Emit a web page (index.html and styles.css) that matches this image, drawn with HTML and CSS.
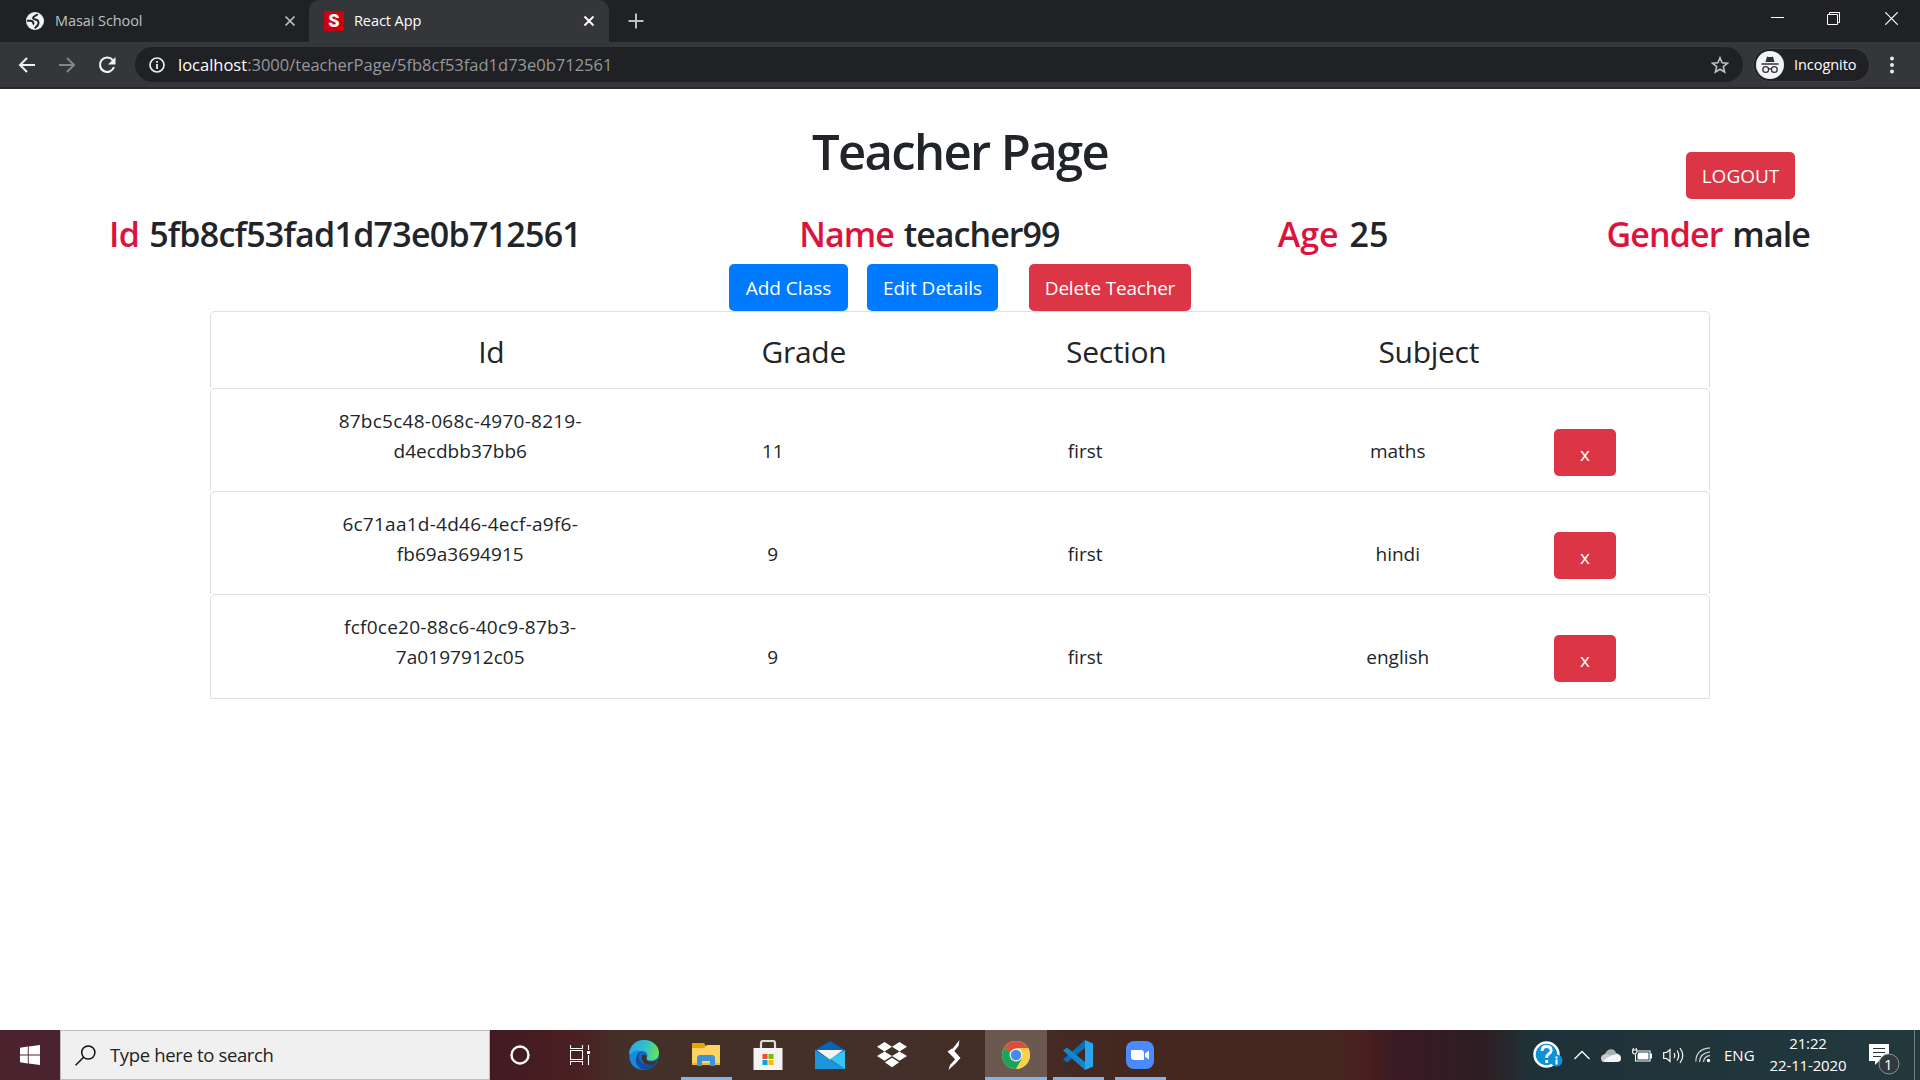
FILE: index.html
```html
<!DOCTYPE html>
<html lang="en">
<head>
<meta charset="utf-8">
<title>React App</title>
<link rel="stylesheet" href="styles.css">
</head>
<body>
<header class="browser">
  <div class="tabs">
    <div class="tab">
      <svg class="fav" width="20" height="20" viewBox="0 0 20 20"><circle cx="10" cy="10" r="9" fill="#f1f3f4"/><path d="M12.500 3c-.5 2-4.500 2-4.500 4 0 1.500 2 1.300 3.500 1.800 2.500.8 2.500 4 1 5.700-1 1.200-2 1.500-2.500 3M2 9.500c2 1 4-.5 5.500 1 1 1 .5 2 1.500 3" fill="none" stroke="#202124" stroke-width="2"/></svg>
      <span class="tab-title">Masai School</span>
      <svg class="close" width="12" height="12" viewBox="0 0 12 12"><path d="M1.500 1.500l9 9m0-9l-9 9" stroke="#bdc1c6" stroke-width="1.700"/></svg>
    </div>
    <div class="tab active">
      <span class="fav s-logo">S</span>
      <span class="tab-title">React App</span>
      <svg class="close" width="12" height="12" viewBox="0 0 12 12"><path d="M1.500 1.500l9 9m0-9l-9 9" stroke="#fff" stroke-width="1.900"/></svg>
    </div>
    <svg class="plus" width="16" height="16" viewBox="0 0 16 16"><path d="M8 .5v15M.5 8h15" stroke="#bdc1c6" stroke-width="2"/></svg>
    <div class="win">
      <svg width="13" height="13" viewBox="0 0 13 13"><path d="M0 5.500h13" stroke="#fff"/></svg>
      <svg width="13" height="13" viewBox="0 0 13 13"><path d="M.5 2.500h10v10H.5zM2.500 2.500v-2h10v10h-2" fill="none" stroke="#fff"/></svg>
      <svg width="13" height="13" viewBox="0 0 13 13"><path d="M.3 .3l12.400 12.400m0-12.400L.3 12.700" stroke="#fff" stroke-width="1.200"/></svg>
    </div>
  </div>
  <div class="toolbar">
    <div class="nav">
      <svg width="18" height="18" viewBox="0 0 18 18"><path d="M17 9H2M9 2L2 9l7 7" fill="none" stroke="#f1f3f4" stroke-width="2"/></svg>
      <svg width="18" height="18" viewBox="0 0 18 18"><path d="M1 9h15M9 2l7 7-7 7" fill="none" stroke="#85868a" stroke-width="2"/></svg>
      <svg width="18" height="18" viewBox="0 0 18 18"><path d="M14.800 4.200A7.200 7.200 0 1 0 16 11" fill="none" stroke="#f1f3f4" stroke-width="2.100"/><path d="M17.500 1v7.500H10z" fill="#f1f3f4"/></svg>
    </div>
    <div class="omnibox">
      <svg width="16" height="16" viewBox="0 0 16 16"><circle cx="8" cy="8" r="7" fill="none" stroke="#e8eaed" stroke-width="1.700"/><path d="M8 7v5M8 4v1.800" stroke="#e8eaed" stroke-width="1.800"/></svg>
      <span class="url"><b>localhost</b>:3000/teacherPage/5fb8cf53fad1d73e0b712561</span>
      <svg class="star" width="18" height="18" viewBox="0 0 18 18"><path d="M9 1.800l2.100 5 5.300.4-4.100 3.500 1.300 5.300L9 13.200 4.400 16l1.300-5.300L1.600 7.200l5.300-.4z" fill="none" stroke="#bdc1c6" stroke-width="1.600"/></svg>
    </div>
    <div class="incognito">
      <svg width="28" height="28" viewBox="0 0 28 28"><circle cx="14" cy="14" r="14" fill="#f1f3f4"/><path d="M9.500 11l1.500-5.500q3 1 6 0l1.500 5.500z" fill="#303134"/><path d="M5.500 13h17" stroke="#303134" stroke-width="1.500"/><circle cx="9.700" cy="18.500" r="2.900" fill="none" stroke="#303134" stroke-width="1.300"/><circle cx="18.300" cy="18.500" r="2.900" fill="none" stroke="#303134" stroke-width="1.300"/><path d="M12.500 18q1.500-.8 3 0" fill="none" stroke="#303134" stroke-width="1.300"/></svg>
      <span>Incognito</span>
    </div>
    <svg class="dots" width="4" height="18" viewBox="0 0 4 18"><circle cx="2" cy="2.500" r="2" fill="#e8eaed"/><circle cx="2" cy="9" r="2" fill="#e8eaed"/><circle cx="2" cy="15.500" r="2" fill="#e8eaed"/></svg>
  </div>
</header>

<main class="page">
  <div class="title-row">
    <h1>Teacher Page</h1>
    <button class="btn danger logout">LOGOUT</button>
  </div>
  <div class="info">
    <h3><span>Id</span> 5fb8cf53fad1d73e0b712561</h3>
    <h3 class="name"><span>Name</span> teacher99</h3>
    <h3 class="age"><span>Age</span> 25</h3>
    <h3 class="gender"><span>Gender</span> male</h3>
  </div>
  <div class="actions">
    <button class="btn primary add">Add Class</button>
    <button class="btn primary edit">Edit Details</button>
    <button class="btn danger delete">Delete Teacher</button>
  </div>
  <div class="classes">
    <div class="card head"><span>Id</span><span>Grade</span><span>Section</span><span>Subject</span></div>
    <div class="card row"><span class="uuid">87bc5c48-068c-4970-8219-<br>d4ecdbb37bb6</span><span>11</span><span>first</span><span>maths</span><button class="btn danger x">x</button></div>
    <div class="card row"><span class="uuid">6c71aa1d-4d46-4ecf-a9f6-<br>fb69a3694915</span><span>9</span><span>first</span><span>hindi</span><button class="btn danger x">x</button></div>
    <div class="card row"><span class="uuid">fcf0ce20-88c6-40c9-87b3-<br>7a0197912c05</span><span>9</span><span>first</span><span>english</span><button class="btn danger x">x</button></div>
  </div>
</main>

<footer class="taskbar">
  <div class="start"><svg width="20" height="20" viewBox="0 0 20 20"><path d="M0 2.700l7.800-1.100v7.900H0zM8.700 1.400L20 0v9.500H8.700zM0 10.400h7.800v8L0 17.300zM8.700 10.400H20V20L8.700 18.500z" fill="#fff"/></svg></div>
  <div class="search">
    <svg width="21" height="21" viewBox="0 0 21 21"><circle cx="13.300" cy="7.500" r="6.600" fill="none" stroke="#111" stroke-width="1.500"/><path d="M8.600 12.300L.6 20.300" stroke="#111" stroke-width="1.500"/></svg>
    <span>Type here to search</span>
  </div>
  <div class="apps">
    <div class="app cortana"><svg width="20" height="20" viewBox="0 0 20 20"><circle cx="10" cy="10" r="8.500" fill="none" stroke="#fff" stroke-width="2.400"/></svg></div>
    <div class="app taskview"><svg width="20" height="20" viewBox="0 0 20 20"><path d="M.5 0v3.500h12V0M.5 5.500h12v9H.5zM.5 20v-3.500h12V20M18.500 0v5M18.500 10v10" fill="none" stroke="#fff" stroke-width="1.100"/><path d="M17 6h3v3h-3z" fill="#fff"/></svg></div>
    <div class="app"><svg width="30" height="30" viewBox="0 0 30 30"><defs><linearGradient id="eg" x1="0" y1=".3" x2="1" y2=".5"><stop offset="0" stop-color="#2aa5e8"/><stop offset=".55" stop-color="#35c1c9"/><stop offset="1" stop-color="#6be252"/></linearGradient></defs><circle cx="15" cy="15" r="15" fill="#0f6fc6"/><path d="M0 14C1 5 7 0 15 0c9 0 15 6 15 13 0 5-4 7.500-8 7.500-3.500 0-5-1-4.500-2.500 2-2 1-7-5-7-6 0-10 4-12.500 3z" fill="url(#eg)"/><path d="M9 14c-2 8 3 14 11 15-8 3-17-1-19-9C-1 13 7 9 12 11c-1 .6-2.500 1.500-3 3z" fill="#1788dc"/><path d="M12.500 11.500c-6 5-1 14 8 13 4-.5 6-2.500 7.500-3C26 27 19 31 13 29.500 4 26 6 13 12.500 11.500z" fill="#0d4f9e"/><path d="M17.500 18c-1 2.500 2 4 6 3.500 3-.3 6-2 7-4v3.500l-2.500 0c-2 3.800-6 4.500-9.500 3.500-5-1-7.500-6-4.500-10 3 0 4 1.500 3.500 3.500z" fill="#43302a"/></svg></div>
    <div class="app open"><svg width="28" height="28" viewBox="0 0 28 28"><path d="M0 2h12l2 3v4H0z" fill="#e5a50a"/><path d="M0 7h12l3-3h13v20H0z" fill="#fdd366"/><path d="M0 22h28v2H0z" fill="#e9b83c"/><path d="M5 25V17q0-3 3-3h12q3 0 3 3v8h-5v-5h-8v5z" fill="#3b91dc"/></svg></div>
    <div class="app"><svg width="30" height="30" viewBox="0 0 30 30"><path d="M8 10V3q0-2 2-2h10q2 0 2 2v7" fill="none" stroke="#ddd" stroke-width="2.200"/><path d="M.5 8h29v22H.5z" fill="#f4f4f4"/><path d="M9.500 14h5v5h-5z" fill="#f04f25"/><path d="M15.500 14h5v5h-5z" fill="#80b900"/><path d="M9.500 20h5v5h-5z" fill="#00a3ee"/><path d="M15.500 20h5v5h-5z" fill="#fcb900"/></svg></div>
    <div class="app"><svg width="30" height="28" viewBox="0 0 30 28"><path d="M0 9L15 0l15 9v4H0z" fill="#0763b5"/><path d="M2 9h26L15 19z" fill="#f5f5f5"/><path d="M0 9l30 19H0z" fill="#1c95dd"/><path d="M30 9v19L15 18z" fill="#35c6f4"/></svg></div>
    <div class="app"><svg width="30" height="26" viewBox="0 0 30 26"><path d="M7.500 0L15 4.700 7.500 9.400 0 4.700zM22.500 0L30 4.700l-7.500 4.700L15 4.700zM7.500 9.400l7.500 4.700-7.500 4.700L0 14.100zM22.500 9.400l7.500 4.700-7.500 4.700-7.500-4.700zM15 15.700l7.200 4.600L15 25.200l-7.200-4.900z" fill="#fff"/></svg></div>
    <div class="app"><svg width="14" height="30" viewBox="0 0 14 30"><path d="M12.500 0L11.500 6 6.500 12 4.500 10zM.5 11.500L5 8.500 13.500 18 8.500 23.500 7.500 18.500zM1.500 30L3 25l4.500-5 1.500 3z" fill="#fff"/></svg></div>
    <div class="app open current"><svg width="28" height="28" viewBox="0 0 28 28"><circle cx="14" cy="14" r="14" fill="#fdd048"/><path d="M14 14L1.900 7a14 14 0 0 1 24.200 0z" fill="#dd4b3e"/><path d="M1.900 7A14 14 0 0 0 14 28l6-10.500-6-3.500z" fill="#1aa260"/><path d="M14 7h12.100A14 14 0 0 1 14 28l6-10z" fill="#fdd048"/><circle cx="14" cy="14" r="6.500" fill="#f3f3f3"/><circle cx="14" cy="14" r="5.200" fill="#4688f4"/></svg></div>
    <div class="app open"><svg width="30" height="30" viewBox="0 0 30 30"><path d="M22 0v8L4 22.500 0 19.500z" fill="#0a6fb8"/><path d="M22 30v-8L4 7.500 0 10.500z" fill="#1286ce"/><path d="M22 0l8 3.500v23L22 30z" fill="#29a7ee"/></svg></div>
    <div class="app open"><svg width="28" height="28" viewBox="0 0 28 28"><rect width="28" height="28" rx="8" fill="#4a8cff"/><path d="M5 9h10q3 0 3 3v7H8q-3 0-3-3zM19 12.500L23 9.500v9l-4-3z" fill="#fff"/></svg></div>
  </div>
  <div class="tray">
    <svg width="30" height="28" viewBox="0 0 30 28"><circle cx="13.500" cy="13.500" r="12" fill="#0b93d5" stroke="#fff" stroke-width="2.500"/><path d="M9 10q0-4.500 4.700-4.500 4.500 0 4.500 4 0 2-2.500 3.500-2 1.200-2 4M13.700 19v3" fill="none" stroke="#fff" stroke-width="2.800"/><circle cx="23.500" cy="19.500" r="6" fill="#0b93d5"/><path d="M23.500 18.500v5M23.500 15.500v2" stroke="#fff" stroke-width="2"/></svg>
    <svg width="16" height="10" viewBox="0 0 16 10"><path d="M.5 9L8 1.500 15.500 9" fill="none" stroke="#fff" stroke-width="1.300"/></svg>
    <svg width="20" height="13" viewBox="0 0 20 13"><path d="M0 9q0-3 4-4Q6 0 10.500.3 14 .6 15 4q5 1 5 5z" fill="#a9b0b1"/><path d="M4 13Q.5 13 .5 10.500 6 9 10 6.500L15.500 5q4.500 1 4.500 4.500 0 3.500-4 3.500z" fill="#f5f5f5"/><path d="M4 13q-4 0-4-4Q1 5.500 5 5q3 0 5 1.500L3 10z" fill="#c9cdce"/></svg>
    <svg width="20" height="14" viewBox="0 0 20 14"><path d="M5.500 3h12.500v10H3.500V6.500" fill="none" stroke="#fff" stroke-width="1.100"/><path d="M6.500 4.500h10v7H5.500V7z" fill="#fff"/><path d="M18.500 6v4h1V6zM1.300 0v2M4.200 0v2M.6 2h4.300v2.500L3.500 6h-1.500L.6 4.500z" fill="none" stroke="#fff" stroke-width="1.100"/></svg>
    <svg width="21" height="17" viewBox="0 0 21 17"><path d="M.7 5.500h3L7 2.500v12l-3.300-3h-3zM11 6q1.500 2.500 0 5M14 3.500q3.500 5 0 10M17 1q5.500 7.500 0 15" fill="none" stroke="#fff" stroke-width="1.200"/></svg>
    <svg width="16" height="16" viewBox="0 0 16 16"><path d="M.8 14.500Q1 2 15 .8M4.500 15Q5 6 15 4.800M8.500 15Q9 9 15 8.600" fill="none" stroke="#ccd2d4" stroke-width="1.200"/><circle cx="13.500" cy="13.500" r="1.700" fill="#fff"/></svg>
    <span class="lang">ENG</span>
    <div class="clock"><span>21:22</span><span>22-11-2020</span></div>
    <div class="notes"><svg width="31" height="32" viewBox="0 0 31 32"><path d="M0 0h20v17H10l-4 4v-4H0z" fill="#fff"/><path d="M4 4.500h12M4 8.500h12M4 12.500h8" stroke="#23393e" stroke-width="1.200"/><circle cx="20" cy="20" r="10" fill="#333a3d" stroke="#8b9294"/></svg><span class="badge">1</span></div>
    <div class="peek"></div>
  </div>
</footer>
</body>
</html>
```
FILE: styles.css
```css
* { box-sizing: border-box; }
body {
  margin: 0;
  width: 1920px;
  height: 1080px;
  overflow: hidden;
  display: flex;
  flex-direction: column;
  background: #fff;
  color: #212529;
  font-family: "Open Sans", "Noto Sans", sans-serif;
  font-size: 19px;
}
svg { display: block; flex: none; }
span, h1, h3, button { white-space: nowrap; }

/* browser chrome */
.browser { height: 89px; background: #35363a; border-bottom: 2px solid #29292c; flex: none; }
.tabs { height: 42px; background: #202124; display: flex; align-items: flex-start; }
.tab { width: 309px; height: 42px; display: flex; align-items: center; padding: 0 13px 0 25px; color: #bdc1c6; font-size: 14.5px; }
.tab.active { width: 300px; background: #35363a; border-radius: 10px 10px 0 0; color: #fff; padding: 0 14px 0 15px; }
.tab-title { margin-left: 10px; padding-bottom: 2px; flex: 1; letter-spacing: -0.08px; }
.s-logo { width: 20px; height: 20px; background: #cb0011; color: #fff; font: 900 18px/20px "Roboto", sans-serif; text-align: center; }
.plus { margin: 13px 0 0 19px; }
.win { margin: 12px 22px 0 auto; display: flex; gap: 44px; }
.win svg:nth-child(2) { margin: 0 1px 0 -1px; }
.toolbar { height: 45px; display: flex; align-items: center; padding: 0 26px 0 18px; }
.nav { display: flex; gap: 22px; }
.omnibox { margin-left: 19px; width: 1608px; height: 35px; border-radius: 18px; background: #202124; display: flex; align-items: center; padding: 0 14px; }
.url { margin-left: 13px; flex: 1; color: #96989b; font-size: 16.5px; padding-bottom: 1px; }
.url b { color: #fff; font-weight: 400; }
.incognito { margin-left: 10px; width: 117px; height: 34px; border-radius: 17px; border: 1px solid #3f4043; background: #202124; color: #fff; display: flex; align-items: center; gap: 10px; padding-left: 2px; font-size: 14.5px; letter-spacing: -0.05px; }
.dots { margin-left: auto; }

/* page content */
.page { flex: 1; display: flex; flex-direction: column; }
.title-row { height: 125px; display: flex; justify-content: center; position: relative; }
h1, h3 { margin: 0; font-weight: 600; }
h1 { font-size: 49px; line-height: 60px; margin-top: 32px; letter-spacing: -1.65px; }
.btn { border: 0; border-radius: 5px; height: 47px; color: #fff; font: 400 19px "Open Sans", sans-serif; padding: 0; }
.primary { background: #007bff; }
.danger { background: #dc3545; }
.logout { position: absolute; left: 1686px; top: 63px; width: 109px; }
.info { height: 50px; display: flex; justify-content: space-between; padding: 0 110px 0 109px; }
h3 { font-size: 34px; line-height: 41px; letter-spacing: -0.75px; word-spacing: 2px; }
h3.name { letter-spacing: -0.95px; }
h3.age { letter-spacing: 0; }
h3.gender { letter-spacing: -0.9px; }
h3 span { color: #dc143c; }
.actions { height: 47px; display: flex; padding-left: 729px; }
.add { width: 119px; }
.edit { width: 131px; margin-left: 19px; }
.delete { width: 162px; margin-left: 31px; letter-spacing: -0.2px; }
.classes { width: 1500px; margin: 0 auto; }
.card { border: 1px solid #dfdfdf; border-bottom: 0; border-radius: 5px 5px 0 0; display: grid; text-align: center; }
.card:last-child { border-bottom: 1px solid #dfdfdf; }
.head { height: 77px; grid-template-columns: repeat(4, 312.5px); padding: 17px 0 0 124px; font-size: 30px; line-height: 45px; letter-spacing: -0.3px; }
.row { height: 103px; grid-template-columns: repeat(4, 312.5px) 62px; padding: 17px 0 0 93px; line-height: 30px; }
.row:last-child { height: 105px; }
.row > span + span { padding-top: 30px; }
.uuid { letter-spacing: 0.05px; }
.uuid::first-line { letter-spacing: 0.25px; }
.row .x { margin-top: 23px; padding-top: 3px; }

/* taskbar */
.taskbar { height: 50px; flex: none; display: flex; background: linear-gradient(90deg, #4b2430 0, #421a22 490px, #4a1f20 575px, #443029 625px, #43302a 900px, #44271f 1150px, #44271f 1330px, #4a1f20 1365px, #391a24 1400px, #2c2024 1490px, #1f3138 1530px, #22393e 1920px); }
.start { width: 60px; padding: 15px 0 0 20px; }
.search { width: 430px; background: #f0f0f0; border: 1px solid #bdbdbd; display: flex; align-items: center; padding-left: 14px; color: #222; font-size: 18.5px; letter-spacing: -0.35px; }
.search span { margin-left: 14px; padding-bottom: 2px; }
.apps { display: flex; }
.app { width: 62px; height: 50px; display: flex; align-items: center; justify-content: center; background: linear-gradient(#7cb6ee, #7cb6ee) center bottom / 0 3px no-repeat; }
.cortana { width: 60px; }
.taskview { width: 63px; padding-right: 3px; }
.open { background-size: 51px 3px; }
.current { background-color: #6b5850; background-size: 100% 3px; }
.tray { flex: 1; display: flex; align-items: center; justify-content: flex-end; color: #fff; font-size: 15px; }
.tray > svg + svg { margin-left: 11px; }
.lang { margin-left: 13px; width: 30px; }
.clock { margin-left: 15px; width: 78px; text-align: center; line-height: 22.5px; padding-bottom: 2px; }
.clock span { display: block; letter-spacing: -0.15px; }
.notes { margin-left: 22px; margin-top: 10px; position: relative; width: 31px; }
.badge { position: absolute; left: 15px; top: 10px; line-height: 20px; }
.peek { width: 1px; height: 50px; margin: 0 5px 0 14px; background: #738184; }
```
